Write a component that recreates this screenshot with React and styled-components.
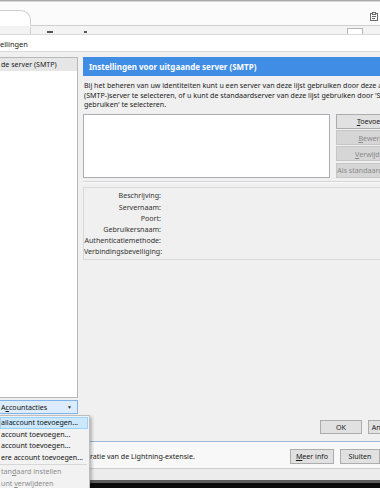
import React from 'react';
import styled, { createGlobalStyle } from 'styled-components';

const Global = createGlobalStyle`
  html, body { margin: 0; padding: 0; background: #f0f0f0; }
  * { box-sizing: border-box; }
`;

const Screen = styled.div`
  width: 380px;
  height: 488px;
  overflow: hidden;
  position: relative;
  display: flex;
  flex-direction: column;
  background: #f0f0f0;
  font-family: "Noto Sans", "Open Sans", sans-serif;
  font-size: 7.1px;
  color: #1e1e1e;
`;

const TopEdge = styled.div`
  height: 2px;
  flex: none;
  background: #a9a9a9;
  border-bottom: 1px solid #d6d6d6;
`;

const TabStrip = styled.div`
  height: 24px;
  flex: none;
  display: flex;
  align-items: flex-end;
  background: #fbfbfb;
`;

const Tab = styled.div`
  width: 31px;
  height: 16px;
  background: #fff;
  border-top: 1px solid #cfcfcf;
  border-right: 1px solid #cfcfcf;
  border-top-right-radius: 10px;
`;

const TabRest = styled.div`
  flex: 1;
  height: 100%;
  border-bottom: 1px solid #cfcfcf;
  display: flex;
  justify-content: flex-end;
  align-items: center;
  padding: 6px 2px 0 0;
  color: #666;
`;

const Toolbar = styled.div`
  height: 9px;
  flex: none;
  background: #f3f3f3;
  border-bottom: 1px solid #dadada;
  display: flex;
  align-items: flex-end;
`;

const ToolSep = styled.span`
  width: 1px;
  height: 7px;
  background: #d0d0d0;
  margin-left: ${p => p.$at}px;
`;

const ToolMark = styled.span`
  width: ${p => p.$w}px;
  height: 2px;
  background: #555;
  margin-left: ${p => p.$at}px;
  margin-bottom: 1px;
`;

const ToolDrop = styled.span`
  width: 16px;
  height: 6px;
  margin-left: auto;
  margin-right: 17px;
  border: 1px solid #b5b5b5;
  border-bottom: none;
  background: #fff;
`;

const DialogTitle = styled.div`
  height: 17px;
  flex: none;
  background: #fff;
  border-bottom: 1px solid #dcdcdc;
  display: flex;
  align-items: center;
  font-size: 7.4px;
  color: #222;
  padding-top: 1px;
`;

const Body = styled.div`
  flex: 1;
  display: grid;
  grid-template-columns: 78px 1fr;
  column-gap: 5px;
  padding: 5px 0 7px 0;
  min-height: 0;
`;

const LeftCol = styled.div`
  display: flex;
  flex-direction: column;
  padding-bottom: 20px;
  min-height: 0;
`;

const AccountList = styled.div`
  flex: 1;
  background: #fff;
  border: 1px solid #b8b8b8;
  border-left: none;
`;

const ListItem = styled.div`
  height: 13px;
  line-height: 13px;
  padding-left: 1px;
  background: ${p => (p.$selected ? '#e6e6e6' : 'transparent')};
  white-space: nowrap;
`;

const ActionsButton = styled.div`
  margin-top: 2px;
  height: 14px;
  display: flex;
  align-items: center;
  justify-content: space-between;
  padding: 0 5px 0 1px;
  background: #dcecfc;
  border: 1px solid #7eb4ea;
  border-left: none;
  color: #111;
`;

const Caret = styled.span`
  font-size: 5px;
  color: #333;
`;

const RightCol = styled.div`
  display: flex;
  flex-direction: column;
  min-width: 0;
`;

const Banner = styled.div`
  height: 19px;
  flex: none;
  background: #3f8de4;
  color: #fff;
  font-weight: 700;
  font-size: 8px;
  display: flex;
  align-items: center;
  padding-left: 6px;
  white-space: nowrap;
`;

const Description = styled.p`
  margin: 5px 0 0 1px;
  line-height: 9.6px;
  white-space: nowrap;
  color: #222;
`;

const ListRow = styled.div`
  margin-top: 4px;
  display: flex;
  gap: 6px;
  height: 64px;
  flex: none;
`;

const ServerList = styled.div`
  width: 247px;
  flex: none;
  background: #fff;
  border: 1px solid #abadb3;
`;

const ButtonCol = styled.div`
  width: 78px;
  flex: none;
  display: flex;
  flex-direction: column;
  justify-content: space-between;
`;

const Button = styled.div`
  height: ${p => p.$h || 15}px;
  width: ${p => (p.$w ? `${p.$w}px` : 'auto')};
  flex: none;
  display: flex;
  align-items: center;
  justify-content: center;
  white-space: nowrap;
  background: ${p => (p.$disabled ? '#d6d6d6' : '#e1e1e1')};
  border: 1px solid ${p => (p.$disabled ? '#c6c6c6' : '#adadad')};
  color: ${p => (p.$disabled ? '#8a8a8a' : '#1a1a1a')};
`;

const Divider = styled.div`
  margin-top: 3px;
  height: 2px;
  flex: none;
  border-top: 1px solid #d5d5d5;
  border-bottom: 1px solid #fafafa;
`;

const Details = styled.div`
  margin-top: 4px;
  height: 73px;
  flex: none;
  border: 1px solid #dadada;
  border-right: none;
  padding-top: 2px;
  display: grid;
  grid-template-columns: 77px 1fr;
  grid-auto-rows: 11.2px;
  align-items: center;
`;

const Label = styled.span`
  text-align: right;
  color: #333;
  white-space: nowrap;
`;

const Spacer = styled.div`
  flex: 1;
`;

const DialogButtons = styled.div`
  display: flex;
  gap: 6px;
  padding-left: 237px;
`;

const NotifyBar = styled.div`
  height: 27px;
  flex: none;
  border-top: 1px solid #9fb8d3;
  background: #f8f8f8;
  display: flex;
  align-items: center;
  gap: 6px;
  padding: 2px 0 0 90px;
`;

const NotifyText = styled.span`
  flex: 1;
  white-space: nowrap;
  color: #222;
`;

const Footer = styled.div`
  height: 12px;
  flex: none;
  background: #ececec;
  border-top: 1px solid #cdcdcd;
`;

const Taskbar = styled.div`
  height: 8px;
  flex: none;
  background: #0b0b0b;
  border-top: 3px solid #5d5d5d;
`;

const Menu = styled.div`
  position: absolute;
  left: 0;
  top: 415px;
  width: 90px;
  padding: 1px 0;
  background: #f2f2f2;
  border: 1px solid #bdbdbd;
  border-left: none;
  box-shadow: 2px 2px 3px rgba(0, 0, 0, 0.25);
`;

const MenuItem = styled.div`
  height: 11.5px;
  line-height: 11.5px;
  margin-right: 1px;
  padding-left: 1px;
  white-space: nowrap;
  color: ${p => (p.$disabled ? '#8d8d8d' : '#111')};
  background: ${p => (p.$active ? '#cce8ff' : 'transparent')};
  box-shadow: ${p => (p.$active ? 'inset 0 0 0 1px #99d1ff' : 'none')};
`;

const MenuSep = styled.div`
  height: 1px;
  margin: 1px 2px 1px 0;
  background: #d7d7d7;
`;

function ClipIcon() {
  return (
    <svg width="8" height="9" viewBox="0 0 8 9" fill="none" stroke="#6a6a6a" strokeWidth="1">
      <rect x="0.5" y="1.5" width="7" height="7" />
      <rect x="2.5" y="0.5" width="3" height="2" fill="#fff" />
      <path d="M2 4.5h4M2 6.5h3" />
    </svg>
  );
}

const labels = [
  'Beschrijving:',
  'Servernaam:',
  'Poort:',
  'Gebruikersnaam:',
  'Authenticatiemethode:',
  'Verbindingsbeveiliging:',
];

export default function App() {
  return (
    <Screen>
      <Global />
      <TopEdge />
      <TabStrip>
        <Tab />
        <TabRest>
          <ClipIcon />
        </TabRest>
      </TabStrip>
      <Toolbar>
        <ToolSep $at={30} />
        <ToolMark $at={16} $w={6} />
        <ToolMark $at={31} $w={3} />
        <ToolDrop />
      </Toolbar>
      <DialogTitle>ellingen</DialogTitle>

      <Body>
        <LeftCol>
          <AccountList>
            <ListItem $selected>de server (SMTP)</ListItem>
          </AccountList>
          <ActionsButton>
            <span>A<u>c</u>countacties</span>
            <Caret>▼</Caret>
          </ActionsButton>
        </LeftCol>

        <RightCol>
          <Banner>Instellingen voor uitgaande server (SMTP)</Banner>
          <Description>
            Bij het beheren van uw identiteiten kunt u een server van deze lijst gebruiken door deze als de u
            <br />
            (SMTP-)server te selecteren, of u kunt de standaardserver van deze lijst gebruiken door 'Standaa
            <br />
            gebruiken' te selecteren.
          </Description>
          <ListRow>
            <ServerList />
            <ButtonCol>
              <Button><span><u>T</u>oevoegen</span></Button>
              <Button $disabled><span><u>B</u>ewerken</span></Button>
              <Button $disabled><span><u>V</u>erwijderen</span></Button>
              <Button $disabled>Als standaard instellen</Button>
            </ButtonCol>
          </ListRow>
          <Divider />
          <Details>
            {labels.map(l => (
              <React.Fragment key={l}>
                <Label>{l}</Label>
                <span />
              </React.Fragment>
            ))}
          </Details>
          <Spacer />
          <DialogButtons>
            <Button $w={42} $h={14}>OK</Button>
            <Button $w={42} $h={14}>Annuleren</Button>
          </DialogButtons>
        </RightCol>
      </Body>

      <NotifyBar>
        <NotifyText>ratie van de Lightning-extensie.</NotifyText>
        <Button $w={44} $h={15}><span><u>M</u>eer info</span></Button>
        <Button $w={40} $h={15}>Sluiten</Button>
      </NotifyBar>
      <Footer />
      <Taskbar />

      <Menu>
        <MenuItem $active>ailaccount toevoegen...</MenuItem>
        <MenuItem>account toevoegen...</MenuItem>
        <MenuItem>account toevoegen...</MenuItem>
        <MenuItem>ere account toevoegen...</MenuItem>
        <MenuSep />
        <MenuItem $disabled>tan<u>d</u>aard instellen</MenuItem>
        <MenuItem $disabled>unt <u>v</u>erwijderen</MenuItem>
      </Menu>
    </Screen>
  );
}
